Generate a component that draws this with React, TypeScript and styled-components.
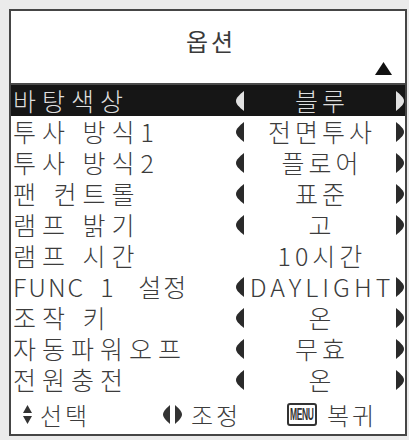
import React from "react";
import styled, { createGlobalStyle } from "styled-components";

const GlobalStyle = createGlobalStyle`
  html, body {
    margin: 0;
    padding: 0;
    background: #ebebeb;
  }
  body {
    font-family: "Noto Sans CJK KR", "Noto Sans", sans-serif;
    color: #3c3c3c;
  }
`;

interface Item {
  label: string;
  value: string;
  arrows?: boolean;
  spacing?: number;
}

const items: Item[] = [
  { label: "바탕색상", value: "블루", arrows: true },
  { label: "투사 방식1", value: "전면투사", arrows: true },
  { label: "투사 방식2", value: "플로어", arrows: true },
  { label: "팬 컨트롤", value: "표준", arrows: true },
  { label: "램프 밝기", value: "고", arrows: true },
  { label: "램프 시간", value: "10시간" },
  { label: "FUNC  1   설정", value: "DAYLIGHT", arrows: true, spacing: 2 },
  { label: "조작 키", value: "온", arrows: true },
  { label: "자동파워오프", value: "무효", arrows: true },
  { label: "전원충전", value: "온", arrows: true },
];

// half-lens arrow, flat side toward the value
const Arrow = ({ dir, color }: { dir: "left" | "right"; color: string }) => (
  <svg width="8" height="20" viewBox="0 0 8 20">
    {dir === "left" ? (
      <path d="M8 0 C3 4 0 7 0 10 C0 13 3 16 8 20 Z" fill={color} />
    ) : (
      <path d="M0 0 C5 4 8 7 8 10 C8 13 5 16 0 20 Z" fill={color} />
    )}
  </svg>
);

const UpDownIcon = () => (
  <svg width="9" height="19" viewBox="0 0 9 19">
    <path d="M4.5 0 L9 8 L0 8 Z" fill="#333" />
    <path d="M0 11 L9 11 L4.5 19 Z" fill="#333" />
  </svg>
);

const LeftRightIcon = () => (
  <svg width="19" height="19" viewBox="0 0 19 19">
    <path d="M7 0 C2.5 4 0 7 0 9.5 C0 12 2.5 15 7 19 Z" fill="#333" />
    <path d="M12 0 C16.5 4 19 7 19 9.5 C19 12 16.5 15 12 19 Z" fill="#333" />
  </svg>
);

const App = () => {
  return (
    <>
      <GlobalStyle />
      <Screen>
        <Panel>
          <Header>
            <Title>옵션</Title>
            <ScrollMark>
              <svg width="17" height="13" viewBox="0 0 17 13">
                <path d="M8.5 0 L17 13 L0 13 Z" fill="#111" />
              </svg>
            </ScrollMark>
          </Header>
          <List>
            {items.map((item, i) => {
              const active = i === 0;
              const arrowColor = active ? "#e2e2e2" : "#2a2a2a";
              return (
                <Row key={item.label} $active={active}>
                  <Label $spacing={item.spacing ?? 6}>{item.label}</Label>
                  <ArrowCell>{item.arrows && <Arrow dir="left" color={arrowColor} />}</ArrowCell>
                  <Value>{item.value}</Value>
                  <ArrowCell>{item.arrows && <Arrow dir="right" color={arrowColor} />}</ArrowCell>
                </Row>
              );
            })}
          </List>
          <Footer>
            <Hint>
              <UpDownIcon />
              <HintText>선택</HintText>
            </Hint>
            <Hint $gap={9}>
              <LeftRightIcon />
              <HintText>조정</HintText>
            </Hint>
            <Hint $gap={10}>
              <MenuKey>
                <MenuKeyText>MENU</MenuKeyText>
              </MenuKey>
              <HintText>복귀</HintText>
            </Hint>
          </Footer>
        </Panel>
      </Screen>
    </>
  );
};

export default App;

const Screen = styled.div`
  width: 409px;
  height: 440px;
  box-sizing: border-box;
  padding: 9px 0 0 9px;
`;

const Panel = styled.div`
  width: 398px;
  height: 427px;
  box-sizing: border-box;
  border: 2px solid #454545;
  background: #ffffff;
  display: flex;
  flex-direction: column;
`;

const Header = styled.div`
  height: 74px;
  box-sizing: border-box;
  border-bottom: 2px solid #4a4a4a;
  display: flex;
  flex-direction: column;
  padding: 17px 13px 0 19px;
`;

const Title = styled.div`
  font-size: 24px;
  line-height: 26px;
  letter-spacing: 3px;
  text-align: center;
  color: #3a3a3a;
`;

const ScrollMark = styled.div`
  display: flex;
  justify-content: flex-end;
  margin-top: 8px;
  height: 13px;
`;

const List = styled.div`
  display: flex;
  flex-direction: column;
`;

const Row = styled.div<{ $active: boolean }>`
  height: 31px;
  display: grid;
  grid-template-columns: 222px 10px 150px 10px;
  align-items: center;
  padding-left: 2px;
  background: ${(p) => (p.$active ? "#161616" : "transparent")};
  color: ${(p) => (p.$active ? "#dedede" : "#3c3c3c")};
  font-size: 25px;
  font-weight: 300;
  line-height: 31px;
`;

const Label = styled.span<{ $spacing: number }>`
  letter-spacing: ${(p) => p.$spacing}px;
  white-space: pre;
`;

const ArrowCell = styled.span`
  display: flex;
  align-items: center;
  padding-left: 1px;
  height: 31px;
`;

const Value = styled.span`
  text-align: center;
  letter-spacing: 4px;
  padding-left: 4px;
  white-space: nowrap;
`;

const Footer = styled.div`
  flex: 1;
  display: grid;
  grid-template-columns: 140px 124px auto;
  align-items: center;
  padding-left: 12px;
`;

const Hint = styled.div<{ $gap?: number }>`
  display: flex;
  align-items: center;
  gap: ${(p) => p.$gap ?? 8}px;
`;

const HintText = styled.span`
  font-size: 24px;
  font-weight: 300;
  line-height: 28px;
  letter-spacing: 3px;
  color: #3c3c3c;
`;

const MenuKey = styled.span`
  width: 30px;
  height: 23px;
  box-sizing: border-box;
  border: 2px solid #333;
  border-radius: 3px;
  display: flex;
  align-items: center;
  justify-content: center;
  overflow: hidden;
`;

const MenuKeyText = styled.span`
  font-family: "Liberation Sans", Arial, sans-serif;
  font-weight: 700;
  font-size: 10px;
  line-height: 10px;
  letter-spacing: -0.5px;
  color: #333;
  transform: scale(0.85, 1.6);
`;
